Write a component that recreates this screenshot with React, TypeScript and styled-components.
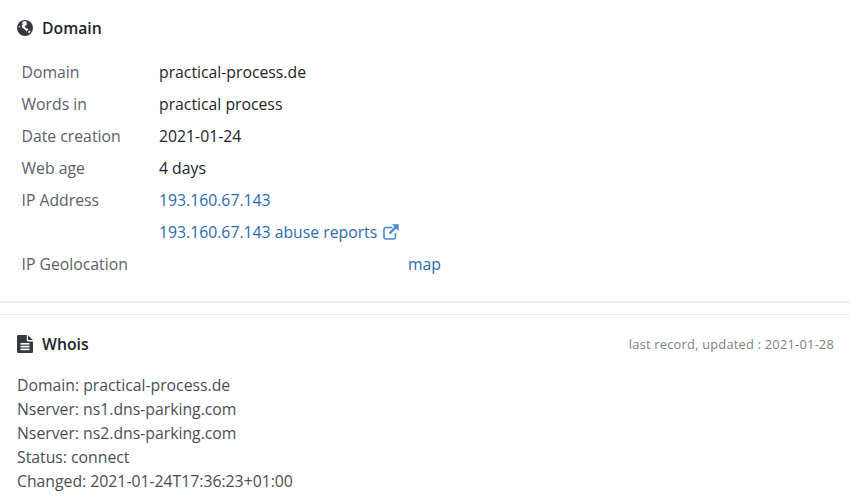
import React from 'react';
import styled, { createGlobalStyle } from 'styled-components';

const GlobalStyle = createGlobalStyle`
    html, body {
        margin: 0;
        padding: 0;
        background: #ffffff;
        font-family: "Open Sans", "Liberation Sans", sans-serif;
        font-size: 15.78px;
        color: #212529;
    }
`;

const Page = styled.div`
    width: 850px;
    height: 503px;
    overflow: hidden;
`;

const Section = styled.section`
    padding: 16px 16px 0 17px;
`;

const DomainSection = styled(Section)`
    height: 303px;
    box-sizing: border-box;
    border-bottom: 2px solid #eeeeee;
`;

const WhoisSection = styled(Section)`
    margin-top: 11px;
    border-top: 1px solid #e9e9e9;
    padding-top: 17px;
`;

const Header = styled.div`
    display: flex;
    align-items: center;
    height: 24px;
    color: #343a40;
`;

const Title = styled.h2`
    margin: 0 0 0 9px;
    font-size: 15.78px;
    font-weight: 600;
    line-height: 24px;
    color: #212529;
`;

const Updated = styled.span`
    margin-left: auto;
    font-size: 12.8px;
    letter-spacing: 0.24px;
    color: #7a7f85;
`;

const Table = styled.div`
    display: grid;
    grid-template-columns: 137.5px 1fr;
    grid-auto-rows: 32px;
    align-items: center;
    margin: 16px 0 0 4.5px;
`;

const Label = styled.div`
    color: #5b6167;
`;

const Value = styled.div`
    color: #212529;
`;

const Link = styled.a`
    color: #2b6cb0;
    text-decoration: none;
    display: inline-flex;
    align-items: center;
`;

const MapCell = styled.div`
    padding-left: 249px;
`;

const IconSvg = styled.svg`
    flex: none;
    display: block;
`;

const LinkIconSvg = styled(IconSvg)`
    margin-left: 6px;
    color: #4a8ac9;
`;

const GlobeIcon: React.FC = () => (
    <IconSvg width="16" height="16" viewBox="0 0 16 16">
        <circle cx="8" cy="8" r="8" fill="currentColor" />
        <path d="M6 1.6C7.4 1 9.4 1.2 10.2 1.9L9.2 3.1L10.4 4.2L8.8 5.2L7.7 6.6L9 8.2L10.6 8.4L11.4 9.6L9.8 11.4L8.6 10.2L6.6 8.4L5.2 7.9L4.6 5.6L5.8 4.4L5 2.8Z" fill="#fff" />
        <path d="M11.2 11.6L12.8 10.6L13.6 11.4L12.4 12.9L11.3 12.8Z" fill="#fff" />
        <path d="M1.6 6.4L2.6 5.8L3.1 7.2L2 7.6Z" fill="#fff" />
    </IconSvg>
);

const ExternalIcon: React.FC = () => (
    <LinkIconSvg width="16" height="16" viewBox="0 0 16 16" fill="none" stroke="currentColor">
        <path d="M9.5 3.5H3a2 2 0 0 0-2 2V13a2 2 0 0 0 2 2h7.5a2 2 0 0 0 2-2V9" strokeWidth="1.6" />
        <path d="M6.5 9.5L14 2" strokeWidth="2.4" />
        <path d="M9.6 0.6H15.4V6.4L9.6 0.6Z" fill="currentColor" strokeWidth="0.6" />
    </LinkIconSvg>
);

const FileIcon: React.FC = () => (
    <IconSvg width="16" height="18" viewBox="0 0 16 18">
        <path d="M1.2 0H9.8V5.6a.8.8 0 0 0 .8.8H16V16.8a1.2 1.2 0 0 1-1.2 1.2H1.2A1.2 1.2 0 0 1 0 16.8V1.2A1.2 1.2 0 0 1 1.2 0Z" fill="currentColor" />
        <path d="M11 0.2L15.8 5H11Z" fill="currentColor" />
        <rect x="3.5" y="8" width="9" height="1.6" fill="#fff" />
        <rect x="3.5" y="10.8" width="9" height="1.6" fill="#fff" />
        <rect x="3.5" y="13.6" width="9" height="1.6" fill="#fff" />
    </IconSvg>
);

const Record = styled.div`
    margin-top: 17px;
    line-height: 24px;
    color: #4a4f55;
`;

const rows: [string, string][] = [
    ['Domain', 'practical-process.de'],
    ['Words in', 'practical process'],
    ['Date creation', '2021-01-24'],
    ['Web age', '4 days'],
];

const whois = [
    'Domain: practical-process.de',
    'Nserver: ns1.dns-parking.com',
    'Nserver: ns2.dns-parking.com',
    'Status: connect',
    'Changed: 2021-01-24T17:36:23+01:00',
];

const App: React.FC = () => {
    return (
        <Page>
            <GlobalStyle />
            <DomainSection>
                <Header>
                    <GlobeIcon />
                    <Title>Domain</Title>
                </Header>
                <Table>
                    {rows.map(([label, value]) => (
                        <React.Fragment key={label}>
                            <Label>{label}</Label>
                            <Value>{value}</Value>
                        </React.Fragment>
                    ))}
                    <Label>IP Address</Label>
                    <Value><Link href="#">193.160.67.143</Link></Value>
                    <Label />
                    <Value><Link href="#">193.160.67.143 abuse reports<ExternalIcon /></Link></Value>
                    <Label>IP Geolocation</Label>
                    <MapCell><Link href="#">map</Link></MapCell>
                </Table>
            </DomainSection>
            <WhoisSection>
                <Header>
                    <FileIcon />
                    <Title>Whois</Title>
                    <Updated>last record, updated : 2021-01-28</Updated>
                </Header>
                <Record>
                    {whois.map((line) => (
                        <div key={line}>{line}</div>
                    ))}
                </Record>
            </WhoisSection>
        </Page>
    );
};

export default App;
